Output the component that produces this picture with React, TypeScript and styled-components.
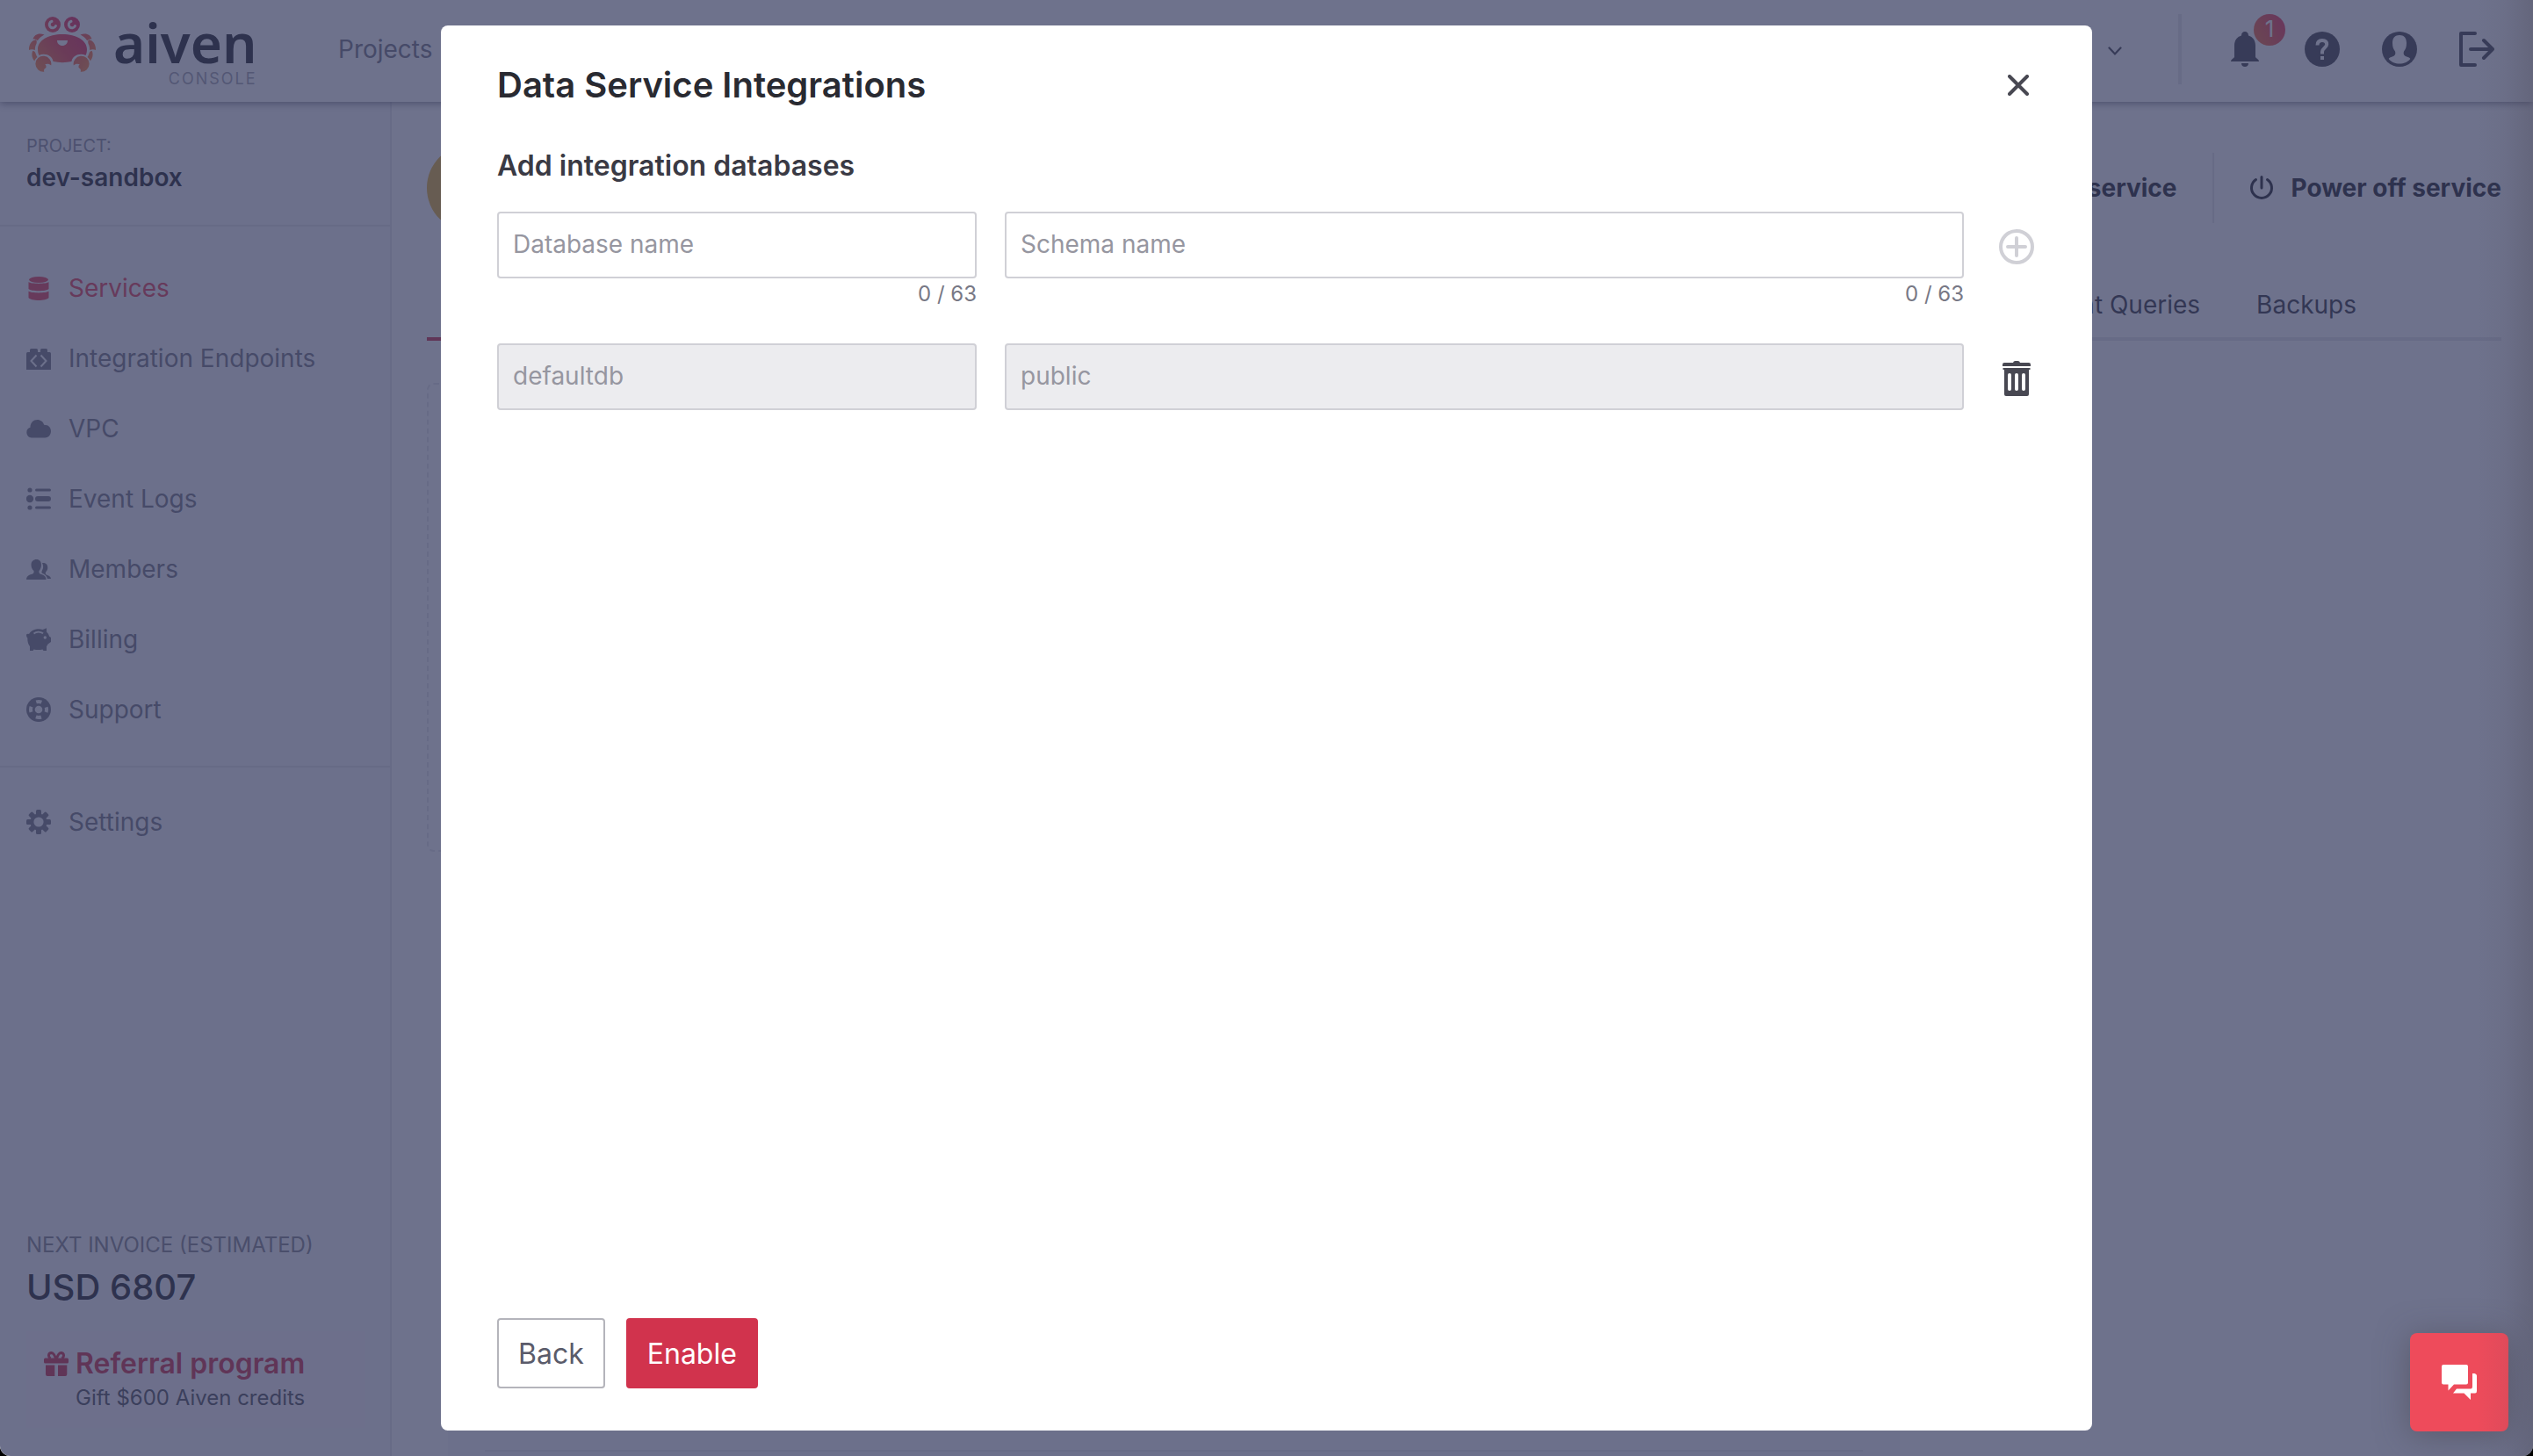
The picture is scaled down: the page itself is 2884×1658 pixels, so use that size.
import React, { useState } from 'react';
import styled, { createGlobalStyle } from 'styled-components';

const color = {
  ink: '#292a31',
  heading: '#3a3a44',
  icon: '#484852',
  body: '#55555f',
  muted: '#787885',
  placeholder: '#9696a0',
  faint: '#9292a0',
  border: '#d0d0d6',
  rule: '#e7e7ec',
  surface: '#f8f8fb',
  primary: '#d1334d',
};

const GlobalStyle = createGlobalStyle`
  *, *::before, *::after { box-sizing: border-box; }
  body {
    margin: 0;
    background: #000;
    color: ${color.ink};
    font-family: Inter, "Liberation Sans", sans-serif;
    font-size: 28px;
  }
  button, input { font: inherit; color: inherit; }
  h1, h2, p, ul { margin: 0; padding: 0; }
  ul { list-style: none; }
  a { color: inherit; text-decoration: none; }
  svg { display: block; flex: none; }
`;

/* ---------- shell ---------- */

const Shell = styled.div`
  position: relative;
  display: flex;
  flex-direction: column;
  height: 100vh;
  overflow: hidden;
  background: #fff;
  border-radius: 0 0 12px 12px;
`;

const TopBar = styled.header`
  z-index: 1;
  display: flex;
  align-items: center;
  height: 116px;
  padding: 0 44px 4px 33px;
  background: #fff;
  box-shadow: 0 2px 8px rgba(30, 30, 50, 0.5);
`;

const Brand = styled.a`
  display: flex;
  gap: 20px;
  width: 352px;
  height: 80px;
`;

const BrandWords = styled.span`
  display: flex;
  flex-direction: column;
  align-items: flex-end;
`;

const BrandName = styled.span`
  font: 600 62px/64px "Noto Sans", sans-serif;
  color: ${color.ink};
`;

const BrandSub = styled.span`
  font-size: 18px;
  line-height: 20px;
  letter-spacing: 2px;
  color: #a6a6b0;
`;

const TopLink = styled.a`
  color: ${color.muted};
`;

const TopActions = styled.div`
  display: flex;
  align-items: center;
  gap: 48px;
  margin-left: auto;
`;

const PlainButton = styled.button`
  position: relative;
  display: flex;
  align-items: center;
  padding: 0;
  border: 0;
  background: none;
  color: ${color.icon};
  cursor: pointer;
`;

const TopRule = styled.span`
  width: 4px;
  height: 80px;
  margin: 0 4px 0 16px;
  background: ${color.rule};
`;

const Badge = styled.span`
  position: absolute;
  left: 30px;
  top: -20px;
  width: 36px;
  height: 36px;
  border-radius: 50%;
  background: linear-gradient(60deg, #f2733f, #ec3360);
  color: #fff;
  font-size: 26px;
  line-height: 34px;
  text-align: center;
`;

const Columns = styled.div`
  display: flex;
  flex: 1;
  min-height: 0;
`;

/* ---------- sidebar ---------- */

const Sidebar = styled.aside`
  display: flex;
  flex-direction: column;
  flex: none;
  width: 446px;
  background: ${color.surface};
  border-right: 2px solid ${color.rule};
`;

const Project = styled.div`
  padding: 36px 30px 32px;
  border-bottom: 2px solid ${color.rule};
`;

const ProjectLabel = styled.p`
  font-size: 20px;
  line-height: 28px;
  color: ${color.faint};
`;

const ProjectName = styled.p`
  font-weight: 600;
  line-height: 44px;
`;

const NavList = styled.ul<{ $divided?: boolean }>`
  padding: ${(p) => (p.$divided ? '22px 30px 24px' : '30px 30px 24px')};
  border-top: ${(p) => (p.$divided ? `2px solid ${color.rule}` : '0')};
`;

const NavLink = styled.a<{ $active?: boolean }>`
  display: flex;
  align-items: center;
  gap: 20px;
  height: 80px;
  color: ${(p) => (p.$active ? '#e6455c' : '#7b7b88')};
`;

const SidebarFoot = styled.div`
  margin-top: auto;
  padding: 0 28px 32px 30px;
`;

const InvoiceLabel = styled.p`
  font-size: 24px;
  line-height: 32px;
  color: #85858f;
`;

const InvoiceTotal = styled.p`
  margin: 8px 0 26px;
  font-size: 40px;
  font-weight: 500;
  line-height: 48px;
`;

const Referral = styled.a`
  display: grid;
  grid-template-columns: 28px 1fr;
  column-gap: 8px;
  align-items: center;
  padding: 16px 20px;
  background: #fbf6fa;
  color: ${color.primary};
`;

const ReferralTitle = styled.span`
  font-size: 32px;
  font-weight: 600;
  line-height: 42px;
`;

const ReferralNote = styled.span`
  grid-column: 2;
  font-size: 24px;
  line-height: 36px;
  color: ${color.body};
`;

/* ---------- service page ---------- */

const Main = styled.main`
  display: flex;
  flex-direction: column;
  flex: 1;
  min-width: 0;
  padding: 48px 36px 0 40px;
`;

const ServiceHead = styled.div`
  display: flex;
  align-items: center;
  gap: 40px;
  height: 100px;
`;

const ServiceAvatar = styled.span`
  width: 100px;
  height: 100px;
  margin-right: auto;
  border-radius: 50%;
  background: #e6b43c;
`;

const ServiceRule = styled.span`
  width: 2px;
  height: 80px;
  background: ${color.rule};
`;

const ServiceAction = styled(PlainButton)`
  gap: 20px;
  color: ${color.ink};
  font-weight: 700;
`;

const Tabs = styled.nav`
  display: flex;
  justify-content: flex-end;
  gap: 64px;
  height: 80px;
  margin-top: 44px;
  padding-right: 165px;
  border-bottom: 4px solid ${color.rule};
`;

const Tab = styled.a`
  padding: 20px 0;
  line-height: 38px;
  color: ${color.heading};
`;

const ActiveTabMark = styled.span`
  width: 150px;
  height: 4px;
  margin: auto auto -4px 0;
  background: ${color.primary};
`;

const EmptyPanel = styled.div`
  flex: none;
  width: 70%;
  height: 534px;
  margin-top: 48px;
  border: 2px dashed ${color.rule};
  border-radius: 8px;
`;

const DetailPanel = styled.div`
  flex: 1;
  width: 70%;
  margin: 24px 0 0 24px;
  padding: 0 42px 5px;
  background: ${color.surface};
  display: flex;
  align-items: flex-end;
`;

const DetailRule = styled.span`
  flex: 1;
  height: 2px;
  background: ${color.rule};
`;

/* ---------- dialog ---------- */

const Backdrop = styled.div`
  position: absolute;
  inset: 0;
  z-index: 2;
  display: flex;
  align-items: center;
  justify-content: center;
  padding: 29px;
  background: rgba(49, 54, 91, 0.7);
`;

const Dialog = styled.section`
  display: flex;
  flex-direction: column;
  width: 100%;
  max-width: 1880px;
  height: 100%;
  padding: 44px 64px 48px;
  background: #fff;
  border-radius: 8px;
`;

const DialogHead = styled.div`
  display: flex;
  align-items: center;
  justify-content: space-between;
`;

const DialogTitle = styled.h1`
  font-size: 40px;
  font-weight: 600;
  line-height: 48px;
`;

const CloseButton = styled(PlainButton)`
  padding: 8px;
`;

const SectionTitle = styled.h2`
  margin: 48px 0 32px;
  font-size: 32px;
  font-weight: 600;
  line-height: 40px;
  color: ${color.heading};
`;

const DatabaseForm = styled.form`
  display: flex;
  flex-direction: column;
  flex: 1;
  gap: 38px;
`;

const DatabaseRow = styled.div`
  display: grid;
  grid-template-columns: 1fr 2fr 50px;
  align-items: start;
  column-gap: 32px;
`;

const Field = styled.div`
  display: flex;
  flex-direction: column;
`;

const TextInput = styled.input`
  width: 100%;
  height: 76px;
  padding: 0 16px 2px;
  border: 2px solid ${color.border};
  border-radius: 4px;
  background: #fff;
  outline: 0;

  &::placeholder { color: ${color.placeholder}; opacity: 1; }
  &:disabled { background: #ececef; color: ${color.placeholder}; }
  &:focus { border-color: ${color.muted}; }
`;

const Counter = styled.span`
  font-size: 24px;
  line-height: 36px;
  text-align: right;
  color: ${color.muted};
`;

const RowButton = styled(PlainButton)`
  padding: 20px 2px 16px 8px;
  &:disabled { color: ${color.border}; cursor: default; }
`;

const DialogFoot = styled.div`
  display: flex;
  gap: 24px;
  margin-top: auto;
`;

const ActionButton = styled.button<{ $primary?: boolean }>`
  height: 80px;
  padding: 0 22px;
  border: 2px solid ${(p) => (p.$primary ? color.primary : '#b4b4bb')};
  border-radius: 4px;
  background: ${(p) => (p.$primary ? color.primary : '#fff')};
  color: ${(p) => (p.$primary ? '#fff' : '#5a5b6a')};
  font-size: 32px;
  cursor: pointer;
`;

const ChatButton = styled.button`
  position: absolute;
  right: 28px;
  bottom: 28px;
  z-index: 3;
  display: flex;
  align-items: center;
  justify-content: center;
  width: 112px;
  height: 112px;
  border: 0;
  border-radius: 8px;
  background: #ee4b5b;
  box-shadow: 0 4px 36px rgba(70, 65, 75, 0.5);
  color: #fff;
  cursor: pointer;
`;

const EdgeShade = styled.div`
  position: absolute;
  inset: 0 0 0 auto;
  z-index: 4;
  width: 64px;
  pointer-events: none;
  background: linear-gradient(to right, rgba(74, 70, 82, 0), rgba(74, 70, 82, 0.08) 50%, rgba(74, 70, 82, 0.28));
`;

/* ---------- icons ---------- */

const CrabLogo = () => {
  const leg = (
    <>
      <path d="M4.5 25.5C6 20.500 11 18 17.500 20.500C14 22.500 11.500 24.500 9.800 27.200C8.500 26 6.500 25.300 4.500 25.500Z" />
      <path d="M0 38C-.3 32 3 27 8 26.300C9.300 28 9 30.500 7.500 33C7 34.500 6.800 36.500 6.900 38C4.500 37 2 37 0 38Z" />
      <path d="M4.200 39C6.500 39.200 7.300 40.500 7.800 42.500C8.300 44.200 8.900 45 9.500 46C8 47.200 7 48.500 6.300 50.500C3.500 47.500 2.600 43 4.200 39Z" />
      <path d="M17.300 62.700A9 9 0 1 1 25.200 55.500C23.500 53.600 20.500 53.200 18.300 54.300C20 56 20 58 18.500 58.800C17.200 59.600 16.700 61 17.300 62.700Z" />
    </>
  );
  return (
    <svg width="76" height="66" viewBox="0 -3 76 66" aria-hidden="true">
      <defs>
        <linearGradient id="crab" gradientUnits="userSpaceOnUse" x1="8" y1="60" x2="66" y2="14">
          <stop offset="0" stopColor="#ff8a45" />
          <stop offset="0.5" stopColor="#f24a52" />
          <stop offset="1" stopColor="#e62a62" />
        </linearGradient>
      </defs>
      <g fill="url(#crab)">
        <circle cx="27" cy="9" r="9" />
        <circle cx="49" cy="9" r="9" />
        <path d="M38 20C54 20 66 27 66 37C66 40 65.500 42 64.500 44C58 41 49.500 44 48.500 51C42 52.500 34 52.500 27.500 51C26.500 44 18 41 11.500 44C10.500 42 10 40 10 37C10 27 22 20 38 20Z" />
        {leg}
      </g>
      <g fill="url(#crab)" transform="translate(76 0) scale(-1 1)">{leg}</g>
      <path d="M32 27H44C44 30.500 41.500 33 38 33C34.500 33 32 30.500 32 27Z" fill="#fff" />
      <g fill="none" stroke="#fff" strokeWidth="3" strokeLinecap="round">
        <path d="M26 5.300A3.800 3.800 0 1 0 30.500 10.500" />
        <path d="M48 5.300A3.800 3.800 0 1 0 52.500 10.500" />
      </g>
    </svg>
  );
};

const Svg = ({ size = 28, children }: { size?: number; children: React.ReactNode }) => (
  <svg width={size} height={size} viewBox={`0 0 ${size} ${size}`} fill="currentColor" aria-hidden="true">
    {children}
  </svg>
);

const DatabaseIcon = () => (
  <Svg>
    <ellipse cx="14" cy="4.500" rx="11" ry="3.500" />
    <path d="M2.500 7C5 9.500 23 9.500 25.500 7V15C23 18 5 18 2.500 15Z" />
    <path d="M2.500 17.500C5 20 23 20 25.500 17.500V25C23 29 5 29 2.500 25Z" />
  </Svg>
);

const BlocksIcon = () => (
  <Svg>
    <path d="M4 7V4.500Q4 3 5.500 3H11.500Q13 3 13 4.500V7H16V4.500Q16 3 17.500 3H22.500Q24 3 24 4.500V7H26.500Q28 7 28 8.500V27H0V8.500Q0 7 1.500 7Z" />
    <path d="M11.500 10.500L5.500 17L11.500 23.500M16.500 10.500L22.500 17L16.500 23.500" fill="none" stroke={color.surface} strokeWidth="2" />
  </Svg>
);

const CloudIcon = () => (
  <Svg>
    <path d="M6 24.500A6 6 0 0 1 4.500 12.800C4.300 7.500 8 4 12.500 4C16.200 4 19 6.200 20.200 9.700C25 9.700 28 12.500 28 17C28 21.500 25 24.500 21 24.500Z" />
  </Svg>
);

const LogsIcon = () => (
  <Svg>
    <circle cx="4" cy="4" r="2.600" />
    <circle cx="4" cy="14" r="4.200" />
    <circle cx="4" cy="24" r="2.600" />
    <rect x="10" y="2.500" width="18" height="3" rx="1.500" />
    <rect x="10" y="11" width="18" height="6" rx="3" />
    <rect x="10" y="22.500" width="18" height="3" rx="1.500" />
  </Svg>
);

const MembersIcon = () => (
  <Svg>
    <path d="M11.500 3C15 3 17 5.500 17 9C17 12 16 14.500 14.500 16C14 19 15.500 19.500 18 20.300C21 21.500 22.500 23 22.500 26H0C0 23 1.500 21.500 4.500 20.300C7.500 19.500 9 19 8.500 16C6.500 14.500 5.500 12 5.500 9C5.500 5.500 8 3 11.500 3Z" />
    <path d="M18 7C21.500 6.500 24.300 8.500 24.300 12C24.300 14.500 23.500 16 22 17.500C21.500 19.500 22 20.300 24 21C26.500 22 28 23 28 25H24C23 21.500 21 20 18 18.800C17 18.200 17.500 17 18 15.500C19.500 13 19.500 10 18 7Z" />
  </Svg>
);

const PiggyIcon = () => (
  <Svg>
    <path d="M0 8.500C1 7.500 2 7.500 3 8C6.500 2.500 13.500 1.500 18.500 3L23 1.200V5.500C24.500 7 25.500 8.500 26 10.500L28 12V17L24.500 19.500C24 20.500 23.500 21.500 23 22V27H19.500L18.500 25.500C15.500 26.300 11.500 26.300 8.500 25.500L7.500 27H4V22C2 19.500 1.200 16.500 1.300 12.500C.3 11.500 0 10 0 8.500Z" />
    <path d="M8.500 7.500C11.500 5 16 5 19 7.300" fill="none" stroke={color.surface} strokeWidth="1.800" />
    <circle cx="21.300" cy="12" r="1.700" fill={color.surface} />
  </Svg>
);

const SupportIcon = () => (
  <Svg>
    <circle cx="14" cy="14" r="14" />
    <circle cx="14" cy="14" r="9" fill="none" stroke={color.surface} strokeWidth="4" strokeDasharray="6.140 8" strokeDashoffset="3.070" />
    <circle cx="14" cy="14" r="4.300" fill={color.surface} />
  </Svg>
);

const GearIcon = () => (
  <Svg>
    {[0, 45, 90, 135].map((angle) => (
      <rect key={angle} x="11" y="0" width="6" height="28" rx="1.500" transform={`rotate(${angle} 14 14)`} />
    ))}
    <circle cx="14" cy="14" r="9.600" />
    <circle cx="14" cy="14" r="5.600" fill={color.surface} />
  </Svg>
);

const GiftIcon = () => (
  <Svg>
    <rect x="0" y="7.500" width="28" height="6" rx="1.500" />
    <path d="M2 15.500H12.300V28H4Q2 28 2 26ZM16 15.500H26.300V26Q26.300 28 24.300 28H16Z" />
    <path d="M13.500 8C12 3.500 10.500 1.300 8 1.500C5 2 4.500 6 7.500 8M14.500 8C16 3.500 17.500 1.300 20 1.500C23 2 23.500 6 20.500 8" fill="none" stroke="currentColor" strokeWidth="3" />
  </Svg>
);

const ChevronIcon = () => (
  <svg width="16" height="16" viewBox="0 0 16 16" fill="none" stroke="currentColor" strokeWidth="2.200" strokeLinecap="round" aria-hidden="true">
    <path d="M1.500 6.500L8 13.500L14.500 6.500" />
  </svg>
);

const BellIcon = () => (
  <Svg size={40}>
    <path d="M16 4.500C16 1.500 17.500 0 20 0C22.500 0 24 1.500 24 4.500C29 6 32 10 32 16V28.500C32 30.500 36 31 36 34H4C4 31 8 30.500 8 28.500V16C8 10 11 6 16 4.500Z" />
    <path d="M16 36H24C24 38.500 22.500 40 20 40C17.500 40 16 38.500 16 36Z" />
  </Svg>
);

const HelpIcon = () => (
  <Svg size={40}>
    <circle cx="20" cy="20" r="20" />
    <path d="M14.500 15.500C14.500 12 16.500 10 20 10C23.300 10 25.200 11.800 25.200 14.600C25.200 18.500 20 18.500 20 23V25.500" fill="none" stroke="#fff" strokeWidth="4" />
    <rect x="18" y="28" width="4" height="4" fill="#fff" />
  </Svg>
);

const UserIcon = () => (
  <Svg size={40}>
    <circle cx="20" cy="20" r="20" />
    <path d="M20 4C25 4 28 7 28 13C28 17.500 27 20 25 22.500C24 26 25.500 27.500 28 28.500C30 29 32 30 32.300 31C29 35 25 36.500 20 36.500C15 36.500 11 35 7.700 31C8 30 10 29 12 28.500C14.500 27.500 16 26 15 22.500C13 20 12 17.500 12 13C12 7 15 4 20 4Z" fill="#fff" />
  </Svg>
);

const LogoutIcon = () => (
  <svg width="40" height="40" viewBox="0 0 40 40" fill="none" stroke="currentColor" strokeWidth="4" strokeLinecap="round" strokeLinejoin="round" aria-hidden="true">
    <path d="M18 2H2V38H18M13 20H38M28 10L38 20L28 30" />
  </svg>
);

const PowerIcon = () => (
  <svg width="28" height="28" viewBox="0 0 28 28" fill="none" stroke="currentColor" strokeWidth="3" strokeLinecap="round" aria-hidden="true">
    <path d="M14 1.500V14M7.500 4.500A11.500 11.500 0 1 0 20.500 4.500" />
  </svg>
);

const CloseIcon = () => (
  <svg width="24" height="24" viewBox="0 0 24 24" fill="none" stroke="currentColor" strokeWidth="4" strokeLinecap="round" aria-hidden="true">
    <path d="M2 2L22 22M22 2L2 22" />
  </svg>
);

const AddIcon = () => (
  <svg width="40" height="40" viewBox="0 0 40 40" fill="none" stroke="currentColor" strokeWidth="4" strokeLinecap="round" aria-hidden="true">
    <circle cx="20" cy="20" r="18" />
    <path d="M20 10V30M10 20H30" />
  </svg>
);

const TrashIcon = () => (
  <Svg size={40}>
    <path d="M4 6V4Q4 2 6 2H16Q16.500 0 18.500 0H21.500Q23.500 0 24 2H34Q36 2 36 4V6Z" />
    <path
      fillRule="evenodd"
      d="M4.500 8H35.500V10H34V38Q34 40 32 40H8Q6 40 6 38V10H4.500ZM10 16V32A2 2 0 0 0 14 32V16A2 2 0 0 0 10 16ZM18 16V32A2 2 0 0 0 22 32V16A2 2 0 0 0 18 16ZM26 16V32A2 2 0 0 0 30 32V16A2 2 0 0 0 26 16Z"
    />
  </Svg>
);

const ChatIcon = () => (
  <Svg size={40}>
    <path d="M2 0H28Q30 0 30 2V20.500Q30 22.500 28 22.500H14L7.500 29.500V22.500H2Q0 22.500 0 20.500V2Q0 0 2 0Z" />
    <path d="M35 10H37.500Q40 10.500 40 12.500V30Q40 32.500 38 32.500H33V40L25.500 32.500H13L17 27.500H33Q35 27.500 35 25Z" />
  </Svg>
);

/* ---------- page ---------- */

const navItems = [
  { label: 'Services', Icon: DatabaseIcon, active: true },
  { label: 'Integration Endpoints', Icon: BlocksIcon },
  { label: 'VPC', Icon: CloudIcon },
  { label: 'Event Logs', Icon: LogsIcon },
  { label: 'Members', Icon: MembersIcon },
  { label: 'Billing', Icon: PiggyIcon },
  { label: 'Support', Icon: SupportIcon },
];

const NAME_LIMIT = 63;

interface LimitedFieldProps {
  label: string;
  value: string;
  onChange: (value: string) => void;
}

const LimitedField = ({ label, value, onChange }: LimitedFieldProps) => (
  <Field>
    <TextInput
      aria-label={label}
      placeholder={label}
      maxLength={NAME_LIMIT}
      value={value}
      onChange={(e) => onChange(e.target.value)}
    />
    <Counter>{`${value.length} / ${NAME_LIMIT}`}</Counter>
  </Field>
);

export default function App() {
  const [database, setDatabase] = useState('');
  const [schema, setSchema] = useState('');
  const [rows, setRows] = useState([{ database: 'defaultdb', schema: 'public' }]);

  const addRow = () => {
    setRows([...rows, { database, schema }]);
    setDatabase('');
    setSchema('');
  };

  return (
    <>
      <GlobalStyle />
      <Shell>
        <TopBar>
          <Brand href="#">
            <CrabLogo />
            <BrandWords>
              <BrandName>aiven</BrandName>
              <BrandSub>CONSOLE</BrandSub>
            </BrandWords>
          </Brand>
          <TopLink href="#">Projects</TopLink>
          <TopActions>
            <PlainButton aria-label="Organization"><ChevronIcon /></PlainButton>
            <TopRule />
            <PlainButton aria-label="Notifications">
              <BellIcon />
              <Badge>1</Badge>
            </PlainButton>
            <PlainButton aria-label="Help"><HelpIcon /></PlainButton>
            <PlainButton aria-label="Account"><UserIcon /></PlainButton>
            <PlainButton aria-label="Log out"><LogoutIcon /></PlainButton>
          </TopActions>
        </TopBar>

        <Columns>
          <Sidebar>
            <Project>
              <ProjectLabel>PROJECT:</ProjectLabel>
              <ProjectName>dev-sandbox</ProjectName>
            </Project>
            <nav>
              <NavList>
                {navItems.map(({ label, Icon, active }) => (
                  <li key={label}>
                    <NavLink href="#" $active={active}><Icon />{label}</NavLink>
                  </li>
                ))}
              </NavList>
              <NavList $divided>
                <li><NavLink href="#"><GearIcon />Settings</NavLink></li>
              </NavList>
            </nav>
            <SidebarFoot>
              <InvoiceLabel>NEXT INVOICE (ESTIMATED)</InvoiceLabel>
              <InvoiceTotal>USD 6807</InvoiceTotal>
              <Referral href="#">
                <GiftIcon />
                <ReferralTitle>Referral program</ReferralTitle>
                <ReferralNote>Gift $600 Aiven credits</ReferralNote>
              </Referral>
            </SidebarFoot>
          </Sidebar>

          <Main>
            <ServiceHead>
              <ServiceAvatar />
              <ServiceAction>service</ServiceAction>
              <ServiceRule />
              <ServiceAction><PowerIcon />Power off service</ServiceAction>
            </ServiceHead>
            <Tabs>
              <ActiveTabMark />
              <Tab href="#">Current Queries</Tab>
              <Tab href="#">Backups</Tab>
            </Tabs>
            <EmptyPanel />
            <DetailPanel><DetailRule /></DetailPanel>
          </Main>
        </Columns>

        <Backdrop>
          <Dialog role="dialog" aria-modal="true" aria-labelledby="dialog-title">
            <DialogHead>
              <DialogTitle id="dialog-title">Data Service Integrations</DialogTitle>
              <CloseButton aria-label="Close"><CloseIcon /></CloseButton>
            </DialogHead>
            <SectionTitle>Add integration databases</SectionTitle>
            <DatabaseForm onSubmit={(e) => e.preventDefault()}>
              <DatabaseRow>
                <LimitedField label="Database name" value={database} onChange={setDatabase} />
                <LimitedField label="Schema name" value={schema} onChange={setSchema} />
                <RowButton type="button" aria-label="Add database" disabled={!database || !schema} onClick={addRow}>
                  <AddIcon />
                </RowButton>
              </DatabaseRow>
              {rows.map((row, i) => (
                <DatabaseRow key={i}>
                  <TextInput aria-label="Database name" value={row.database} disabled />
                  <TextInput aria-label="Schema name" value={row.schema} disabled />
                  <RowButton
                    type="button"
                    aria-label="Remove database"
                    onClick={() => setRows(rows.filter((_, n) => n !== i))}
                  >
                    <TrashIcon />
                  </RowButton>
                </DatabaseRow>
              ))}
              <DialogFoot>
                <ActionButton type="button">Back</ActionButton>
                <ActionButton type="submit" $primary>Enable</ActionButton>
              </DialogFoot>
            </DatabaseForm>
          </Dialog>
        </Backdrop>

        <ChatButton aria-label="Open chat"><ChatIcon /></ChatButton>
        <EdgeShade />
      </Shell>
    </>
  );
}
